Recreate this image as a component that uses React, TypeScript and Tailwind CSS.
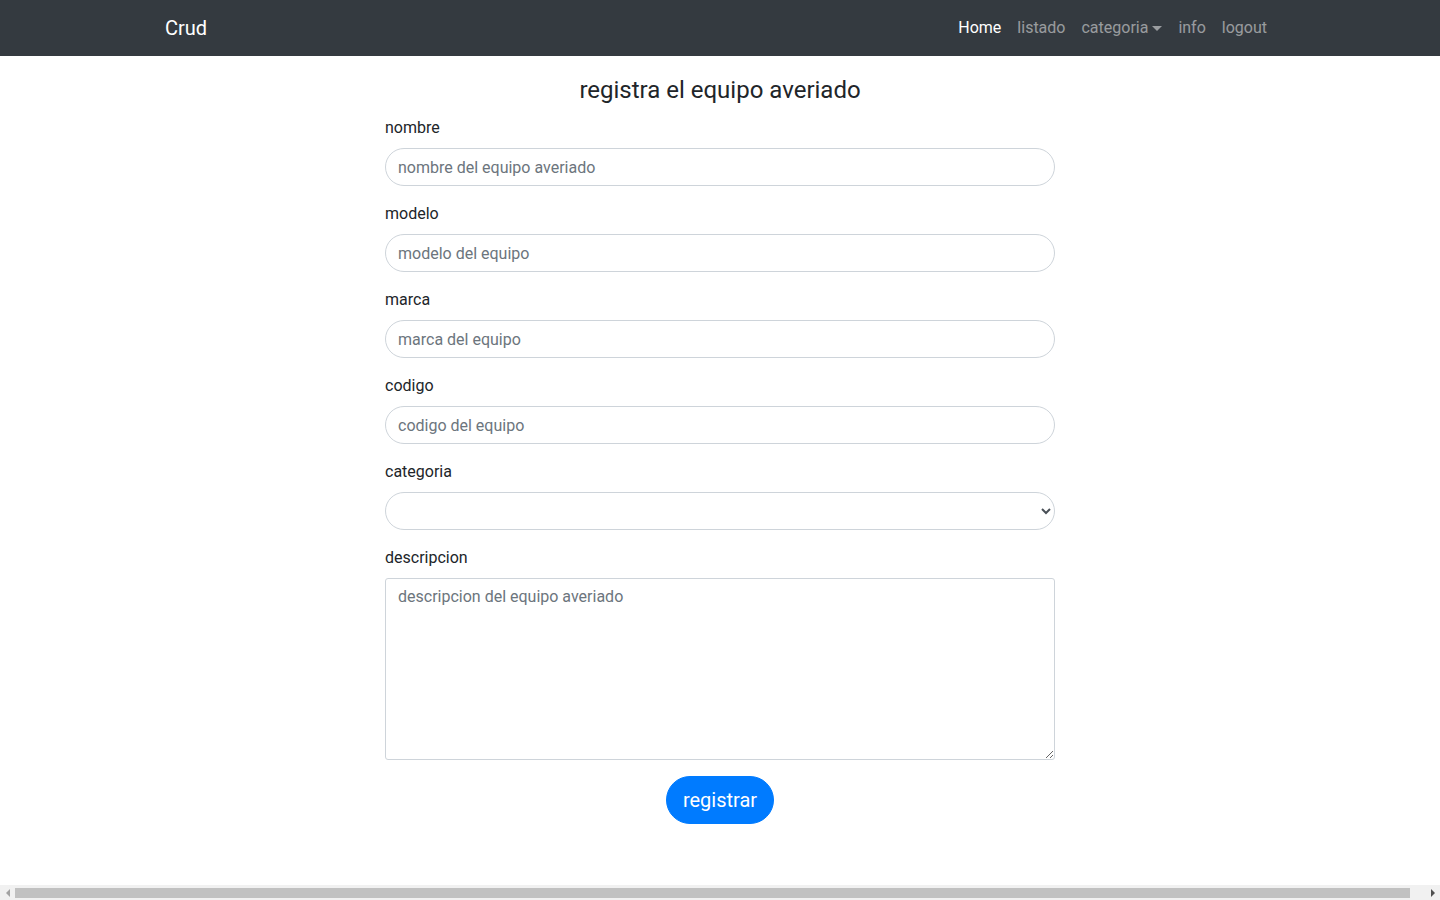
import React from "react";

const Field = ({ label, placeholder }: { label: string; placeholder: string }) => (
  <div className="mb-4">
    <label className="block mb-2 leading-6">{label}</label>
    <input
      type="text"
      placeholder={placeholder}
      className="block w-full h-[38px] px-3 pt-[7px] pb-[5px] leading-6 border border-[#ced4da] rounded-full text-[#495057] placeholder:text-[#6c757d] bg-white"
    />
  </div>
);

export default function App() {
  return (
    <div className="text-[#212529] text-base leading-6 bg-white" style={{ fontFamily: 'Roboto, "Liberation Sans", sans-serif' }}>
      <nav className="bg-[#343a40] h-14">
        <div className="max-w-[1140px] mx-auto px-[15px] h-full flex items-center justify-between">
          <a className="text-white text-xl leading-[30px] py-[5px]">Crud</a>
          <ul className="flex items-center">
            <li className="px-2 text-white">Home</li>
            <li className="px-2 text-white/50">listado</li>
            <li className="px-2 text-white/50 flex items-center">
              categoria
              <span className="ml-[4px] inline-block w-0 h-0 border-t-[5px] border-t-current border-x-[5px] border-x-transparent"></span>
            </li>
            <li className="px-2 text-white/50">info</li>
            <li className="px-2 text-white/50">logout</li>
          </ul>
        </div>
      </nav>
      <main className="-mx-[15px] px-[15px]">
        <form className="w-[670px] mx-auto pt-[20px]">
          <h4 className="text-2xl leading-[1.2] text-center font-normal mb-[11px]">registra el equipo averiado</h4>
          <Field label="nombre" placeholder="nombre del equipo averiado" />
          <Field label="modelo" placeholder="modelo del equipo" />
          <Field label="marca" placeholder="marca del equipo" />
          <Field label="codigo" placeholder="codigo del equipo" />
          <div className="mb-4">
            <label className="block mb-2 leading-6">categoria</label>
            <select className="block w-full h-[38px] px-3 py-1.5 leading-6 border border-[#ced4da] rounded-full text-[#495057] bg-white">
              <option></option>
            </select>
          </div>
          <div className="mb-4">
            <label className="block mb-2 leading-6">descripcion</label>
            <textarea
              rows={7}
              placeholder="descripcion del equipo averiado"
              className="block w-full h-[182px] px-3 py-1.5 leading-6 border border-[#ced4da] rounded-[3px] text-[#495057] placeholder:text-[#6c757d] bg-white"
            />
          </div>
          <div className="flex justify-center">
            <button type="button" className="bg-[#007bff] text-white text-xl leading-[30px] px-4 py-2 border border-[#007bff] rounded-full">
              registrar
            </button>
          </div>
        </form>
      </main>
      <div className="fixed left-0 right-0 bottom-0 h-[15px] bg-[#f1f1f1] flex items-center">
        <div className="w-[15px] h-full flex items-center justify-center">
          <span className="w-0 h-0 border-y-[4px] border-y-transparent border-r-[4px] border-r-[#a3a3a3]"></span>
        </div>
        <div className="flex-1 h-full flex items-center pr-[15px]">
          <div className="h-[10px] w-[1395px] bg-[#c1c1c1]"></div>
        </div>
        <div className="w-[15px] h-full flex items-center justify-center">
          <span className="w-0 h-0 border-y-[4px] border-y-transparent border-l-[4px] border-l-[#505050]"></span>
        </div>
      </div>
    </div>
  );
}
